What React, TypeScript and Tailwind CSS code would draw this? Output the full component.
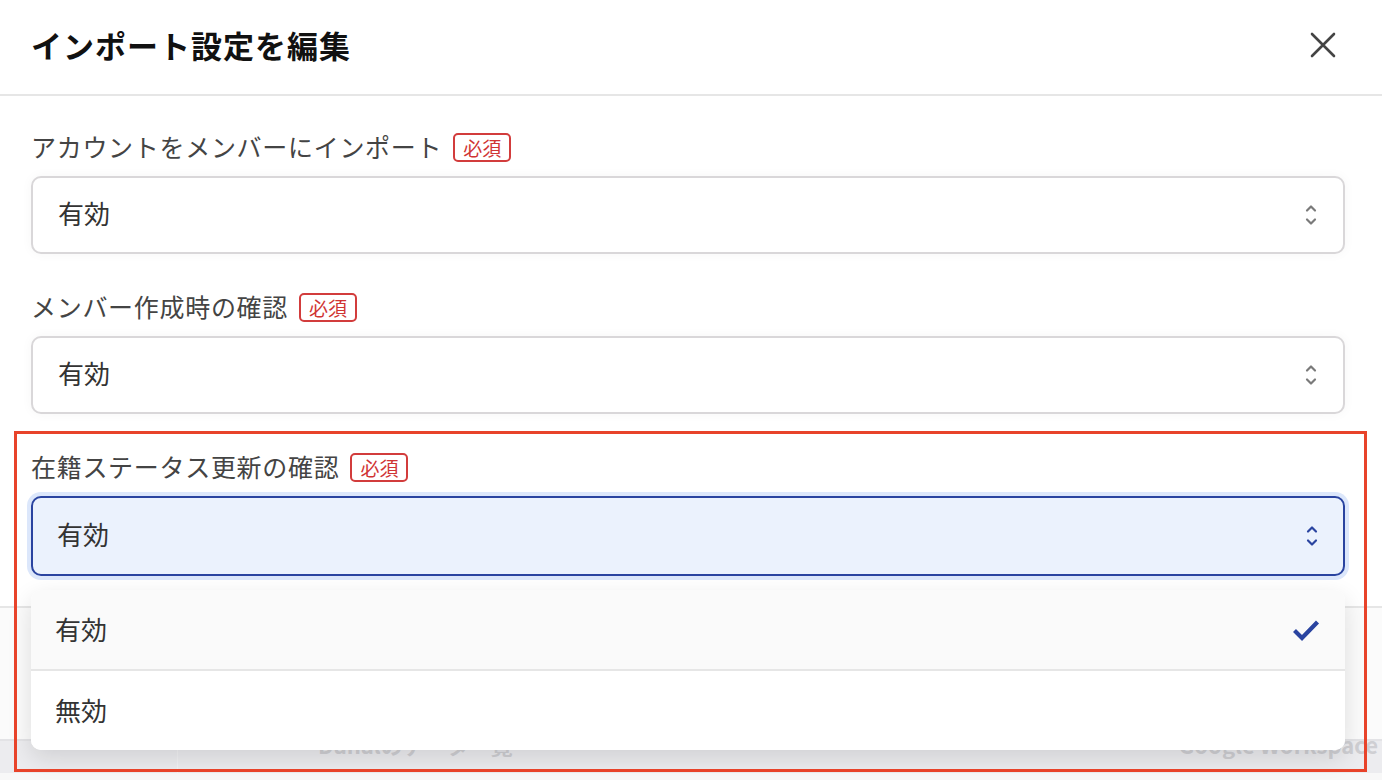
import React from 'react';

const FONT = '"Noto Sans CJK JP", "Noto Sans", "Liberation Sans", sans-serif';

const RequiredBadge: React.FC = () => (
  <span className="inline-flex items-center h-[29px] px-[8px] border-2 border-[#d23c3c] rounded-[5px] text-[19px] leading-none text-[#d03434]">
    必須
  </span>
);

const Chevrons: React.FC<{ active?: boolean }> = ({ active }) => (
  <svg width="14" height="26" viewBox="0 0 14 26" fill="none" className={active ? 'text-[#2a44a0]' : 'text-[#7a7a7a]'}>
    <path d="M3 8.5 L7 4.5 L11 8.5" stroke="currentColor" strokeWidth="2.2" strokeLinecap="round" strokeLinejoin="round" />
    <path d="M3 17.5 L7 21.5 L11 17.5" stroke="currentColor" strokeWidth="2.2" strokeLinecap="round" strokeLinejoin="round" />
  </svg>
);

interface FieldProps {
  label: string;
  value: string;
  active?: boolean;
  last?: boolean;
}

const SelectField: React.FC<FieldProps> = ({ label, value, active, last }) => (
  <div className={last ? '' : 'mb-[39px]'}>
    <div className="flex items-center gap-[11px] h-[29px] mb-[14px]">
      <span className="text-[25px] leading-none text-[#444] tracking-[0.7px] mb-[3px]">{label}</span>
      <RequiredBadge />
    </div>
    {active ? (
      <div className="flex items-center justify-between h-[80px] pl-[24px] pr-[24px] rounded-[10px] border-2 border-[#2a44a0] bg-[#ebf2fd] ring-4 ring-[#dce7fb]">
        <span className="text-[26px] text-[#333] mb-[5px]">{value}</span>
        <Chevrons active />
      </div>
    ) : (
      <div className="flex items-center justify-between h-[78px] pl-[25px] pr-[25px] rounded-[10px] border-2 border-[#d9d7d9] bg-white shadow-[0_0_12px_rgba(0,0,0,0.04)]">
        <span className="text-[26px] text-[#333] mb-[5px]">{value}</span>
        <Chevrons />
      </div>
    )}
  </div>
);

const App: React.FC = () => {
  return (
    <div className="relative w-[1382px] h-[780px] overflow-hidden bg-white" style={{ fontFamily: FONT }}>
      {/* Header */}
      <div className="flex items-center justify-between h-[96px] pl-[31px] pr-[46px] border-b-2 border-[#e6e6e6]">
        <h2 className="text-[31px] font-bold text-[#111] tracking-[1px] -mt-[4px]">インポート設定を編集</h2>
        <svg width="26" height="26" viewBox="0 0 26 26" className="-mt-[4px]">
          <path d="M2 2 L24 24 M24 2 L2 24" stroke="#444" strokeWidth="2.6" strokeLinecap="round" />
        </svg>
      </div>

      {/* Body */}
      <div className="pl-[31px] pr-[37px] pt-[37px]">
        <SelectField label="アカウントをメンバーにインポート" value="有効" />
        <SelectField label="メンバー作成時の確認" value="有効" />
        <SelectField label="在籍ステータス更新の確認" value="有効" active last />
      </div>

      {/* Background content behind dropdown */}
      <div className="mt-[30px] h-[133px] border-t-2 border-[#e6e6e6] bg-[#fbfbfb]" />
      <div className="flex items-start h-[34px] border-t-2 border-[#e3e3e6] bg-[#ececef] text-[22px] leading-none text-[#cfcfd3]">
        <div className="w-[178px] h-full border-r border-[#f2f2f4]" />
        <span className="ml-[140px] mt-[-8px] font-bold">Danalのデータ一覧</span>
        <span className="ml-auto mr-[4px] mt-[-8px] font-bold">Google Workspace</span>
      </div>
      <div className="h-[10px] bg-[#f8f8f8]" />

      {/* Dropdown menu */}
      <div className="absolute left-[31px] top-[590px] w-[1314px] rounded-[10px] overflow-hidden bg-white shadow-[0_8px_24px_rgba(0,0,0,0.12)]">
        <div className="flex items-center justify-between h-[81px] pl-[24px] pr-[25px] bg-[#fafafa] border-b-2 border-[#e6e6e6]">
          <span className="text-[26px] text-[#333] mb-[3px]">有効</span>
          <svg width="28" height="24" viewBox="0 0 28 24">
            <path d="M2.5 12.5 L10 20 L25.5 4" stroke="#2a44a0" strokeWidth="4.2" fill="none" />
          </svg>
        </div>
        <div className="flex items-center h-[79px] pl-[24px] bg-white">
          <span className="text-[26px] text-[#333] mb-[3px]">無効</span>
        </div>
      </div>

      {/* Annotation box */}
      <div className="absolute left-[14px] top-[431px] w-[1353px] h-[341px] border-[3px] border-[#e8432a] pointer-events-none" />
    </div>
  );
};

export default App;
